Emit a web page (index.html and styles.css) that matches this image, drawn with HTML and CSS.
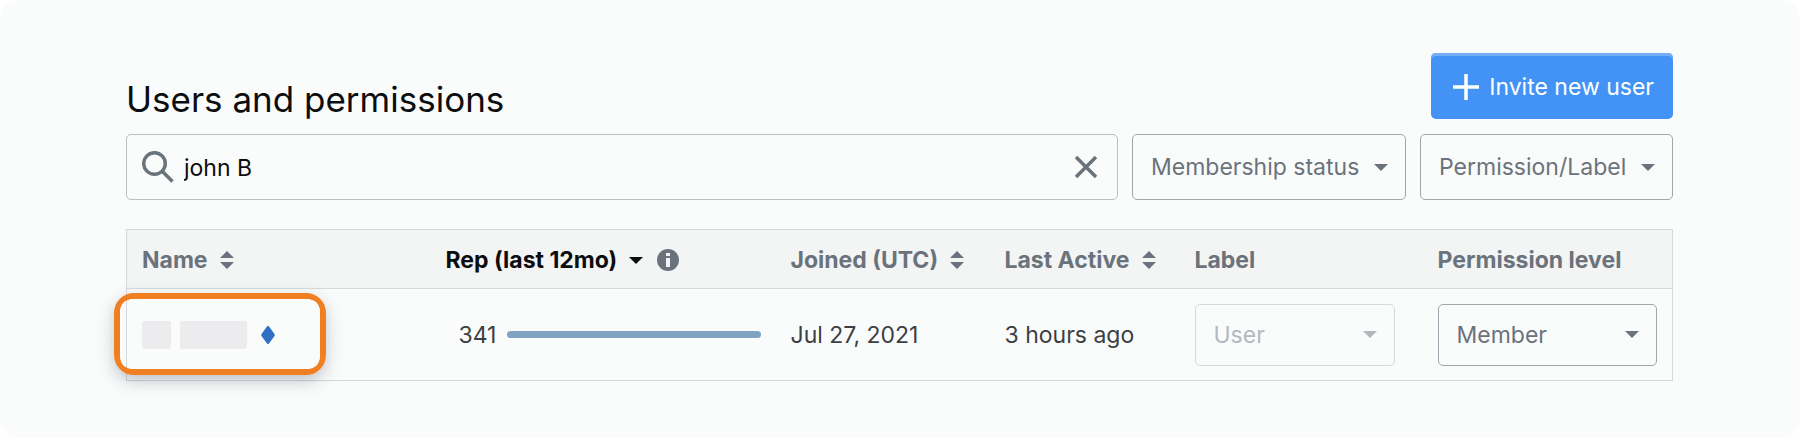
FILE: index.html
```html
<!DOCTYPE html>
<html lang="en">
<head>
  <meta charset="UTF-8">
  <meta name="viewport" content="width=device-width, initial-scale=1.0">
  <title>Users and permissions</title>
  <link rel="stylesheet" href="styles.css">
</head>
<body>
  <main class="page">
    <div class="header">
      <h1>Users and permissions</h1>
      <button type="button" class="button-primary">
        <svg width="26" height="26" viewBox="0 0 26 26" fill="none" stroke="currentColor" stroke-width="3.500" aria-hidden="true">
          <path d="M13 0v26M0 13h26"></path>
        </svg>
        Invite new user
      </button>
    </div>

    <form class="filters">
      <div class="search">
        <svg width="32" height="32" viewBox="0 0 32 32" fill="none" stroke="currentColor" stroke-width="3.500" aria-hidden="true">
          <circle cx="12.500" cy="12.500" r="10.800"></circle>
          <path d="M20 20l10.500 10.500"></path>
        </svg>
        <input type="text" value="john B" aria-label="Search users">
        <button type="button" class="clear" aria-label="Clear search">
          <svg width="22" height="22" viewBox="0 0 22 22" fill="none" stroke="currentColor" stroke-width="3.500" aria-hidden="true">
            <path d="M1 1l20 20M21 1L1 21"></path>
          </svg>
        </button>
      </div>
      <div class="select select-filter">
        <select aria-label="Membership status">
          <option>Membership status</option>
        </select>
        <svg class="arrow" width="14" height="7" viewBox="0 0 14 7" aria-hidden="true"><path d="M0 0h14L7 7z"></path></svg>
      </div>
      <div class="select select-filter">
        <select aria-label="Permission/Label">
          <option>Permission/Label</option>
        </select>
        <svg class="arrow" width="14" height="7" viewBox="0 0 14 7" aria-hidden="true"><path d="M0 0h14L7 7z"></path></svg>
      </div>
    </form>

    <table class="users">
      <colgroup>
        <col class="col-name">
        <col class="col-rep">
        <col class="col-joined">
        <col class="col-active">
        <col class="col-label">
        <col class="col-permission">
      </colgroup>
      <thead>
        <tr>
          <th scope="col">
            <a href="#" class="sort">Name
              <svg width="14" height="18" viewBox="0 0 14 18" aria-hidden="true"><path d="M0 7h14L7 0zM0 11h14l-7 7z"></path></svg>
            </a>
          </th>
          <th scope="col">
            <div class="sort-group">
              <a href="#" class="sort sort-active">Rep (last 12mo)
                <svg width="14" height="7" viewBox="0 0 14 7" aria-hidden="true"><path d="M0 0h14L7 7z"></path></svg>
              </a>
              <svg class="info" width="22" height="22" viewBox="0 0 22 22" aria-hidden="true">
                <circle cx="11" cy="11" r="11"></circle>
                <path class="info-mark" d="M9 4h4v3H9zM9 9h4v9H9z"></path>
              </svg>
            </div>
          </th>
          <th scope="col">
            <a href="#" class="sort">Joined (UTC)
              <svg width="14" height="18" viewBox="0 0 14 18" aria-hidden="true"><path d="M0 7h14L7 0zM0 11h14l-7 7z"></path></svg>
            </a>
          </th>
          <th scope="col">
            <a href="#" class="sort">Last Active
              <svg width="14" height="18" viewBox="0 0 14 18" aria-hidden="true"><path d="M0 7h14L7 0zM0 11h14l-7 7z"></path></svg>
            </a>
          </th>
          <th scope="col">Label</th>
          <th scope="col">Permission level</th>
        </tr>
      </thead>
      <tbody>
        <tr>
          <td class="name-cell">
            <div class="user">
              <span class="redacted redacted-avatar"></span>
              <span class="redacted redacted-name"></span>
              <svg width="14" height="20" viewBox="0 0 14 20" aria-hidden="true">
                <path class="diamond" d="M6 1.500Q7 0 8 1.500L13.500 9Q14 10 13.500 11L8 18.500Q7 20 6 18.500L.5 11Q0 10 .5 9z"></path>
              </svg>
            </div>
            <span class="highlight"></span>
          </td>
          <td>
            <div class="rep">
              <span>341</span>
              <span class="rep-bar"></span>
            </div>
          </td>
          <td>Jul 27, 2021</td>
          <td>3 hours ago</td>
          <td>
            <div class="select select-label">
              <select aria-label="Label" disabled>
                <option>User</option>
              </select>
              <svg class="arrow" width="14" height="7" viewBox="0 0 14 7" aria-hidden="true"><path d="M0 0h14L7 7z"></path></svg>
            </div>
          </td>
          <td>
            <div class="select">
              <select aria-label="Permission level">
                <option>Member</option>
              </select>
              <svg class="arrow" width="14" height="7" viewBox="0 0 14 7" aria-hidden="true"><path d="M0 0h14L7 7z"></path></svg>
            </div>
          </td>
        </tr>
      </tbody>
    </table>
  </main>
</body>
</html>
```

FILE: styles.css
```css
* {
  box-sizing: border-box;
}
body {
  font-family: Inter, "Liberation Sans", sans-serif;
  font-size: 23px;
  line-height: 28px;
  color: #3b4045;
  background-color: #ffffff;
  margin: 0;
}
button,
input,
select {
  font: inherit;
  color: inherit;
  margin: 0;
}
.page {
  min-height: 100vh;
  padding: 53px 127px 56px 126px;
  background-color: #fafcfb;
  border-radius: 20px;
}
.header {
  display: flex;
  justify-content: space-between;
  align-items: flex-end;
  margin-bottom: 15px;
}
h1 {
  font-size: 35px;
  line-height: 40px;
  font-weight: 400;
  color: #0c0d0e;
  margin: 0;
}
.button-primary {
  display: flex;
  align-items: center;
  gap: 10px;
  height: 66px;
  padding: 2px 19px 0 22px;
  color: #ffffff;
  background-color: #4393f7;
  border: 0;
  border-radius: 5px;
  box-shadow: inset 0 3px 0 #72aefa;
  cursor: pointer;
}
.filters {
  display: flex;
  gap: 14px;
  margin-bottom: 29px;
}
.search {
  flex: 1;
  display: flex;
  align-items: center;
  gap: 10px;
  height: 66px;
  padding: 0 20px 0 15px;
  color: #6a737c;
  border: 1px solid #babfc4;
  border-radius: 5px;
}
.search input {
  flex: 1;
  min-width: 0;
  padding: 2px 0 0;
  color: #0c0d0e;
  background: none;
  border: 0;
  outline: none;
}
.clear {
  display: flex;
  padding: 0;
  color: #6a737c;
  background: none;
  border: 0;
  cursor: pointer;
}

/* The arrow shares the grid cell of its select */
.select {
  display: grid;
  align-items: center;
  color: #6a737c;
}
.select select {
  grid-area: 1 / 1;
  width: 100%;
  height: 62px;
  padding: 0 46px 0 18px;
  background-color: transparent;
  border: 1px solid #9fa6ad;
  border-radius: 5px;
  appearance: none;
}
.arrow {
  grid-area: 1 / 1;
  justify-self: end;
  margin-right: 18px;
  fill: currentColor;
  pointer-events: none;
}
.select-filter select {
  height: 66px;
  padding: 0 45px 0 18px;
}
.select-label {
  color: #b4b8bd;
  width: 200px;
}
.select-label select {
  border-color: #d6d9dc;
  opacity: 1;
}

.users {
  width: 100%;
  table-layout: fixed;
  border-collapse: collapse;
  border: 1px solid #d6d9dc;
}
.users th,
.users td {
  padding: 14px 15px;
  text-align: left;
  vertical-align: middle;
  white-space: nowrap;
}
.users th {
  height: 59px;
  padding: 16px 15px 14px;
  font-weight: 700;
  color: #6a737c;
  background-color: #f3f4f4;
  border-bottom: 1px solid #d6d9dc;
}
.users td {
  height: 92px;
}
.col-name {
  width: 304px;
}
.col-rep {
  width: 345px;
}
.col-joined {
  width: 214px;
}
.col-active {
  width: 190px;
}
.col-label {
  width: 243px;
}
.sort {
  display: inline-flex;
  align-items: center;
  gap: 12px;
  color: inherit;
  text-decoration: none;
}
.sort svg {
  fill: currentColor;
}
.sort-active {
  color: #0c0d0e;
}
.sort-group {
  display: flex;
  align-items: center;
  gap: 14px;
}
.info {
  fill: #6a737c;
}
.info-mark {
  fill: #f3f4f4;
}

.name-cell {
  position: relative;
}
.user {
  display: flex;
  align-items: center;
}
.redacted {
  height: 28px;
  background-color: #ececee;
  border-radius: 2px;
}
.redacted-avatar {
  width: 29px;
  margin-right: 9px;
}
.redacted-name {
  width: 67px;
  margin-right: 14px;
}
.diamond {
  fill: #2f70c4;
}
/* Clipped so that the shadow stays outside the ring */
.highlight {
  position: absolute;
  top: 4px;
  left: -13px;
  width: 212px;
  height: 82px;
  border: 6px solid #f07f22;
  border-radius: 20px;
  box-shadow: 0 6px 16px rgba(60, 64, 90, 0.3);
  clip-path: path(evenodd, "M-40 -40H260V140H-40Z M20 6H192Q206 6 206 20V62Q206 76 192 76H20Q6 76 6 62V20Q6 6 20 6Z");
  pointer-events: none;
}
.rep {
  display: flex;
  align-items: center;
  gap: 11px;
  padding-left: 13px;
}
.rep-bar {
  flex: 1;
  height: 7px;
  background-color: #80a3c3;
  border-radius: 4px;
}
```
